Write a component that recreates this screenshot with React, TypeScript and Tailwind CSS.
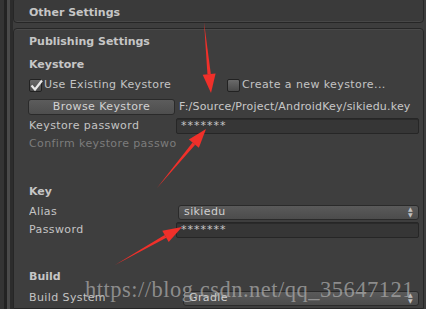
import React from "react";

const font = { fontFamily: '"DejaVu Sans", "Liberation Sans", sans-serif' };

const Checkbox = ({ checked }: { checked?: boolean }) => (
  <span className="relative inline-block w-[13px] h-[13px] rounded-[2px] border border-[#222] bg-gradient-to-b from-[#6a6a6a] to-[#4a4a4a] mr-[2px]">
    {checked && (
      <svg className="absolute -left-[1px] -top-[2px]" width="15" height="15" viewBox="0 0 15 15">
        <path d="M2.5 7.5 L6 11.5 L13 2.5" fill="none" stroke="#e8e8e8" strokeWidth="2.2" />
      </svg>
    )}
  </span>
);

const Field = ({ children }: { children?: React.ReactNode }) => (
  <div className="flex-1 h-[16px] bg-[#363636] border border-[#262626] shadow-[inset_0_1px_0_#2a2a2a] rounded-[2px] px-[4px] flex items-center text-[#c8c8c8] tracking-[1px]">
    {children}
  </div>
);

const Popup = ({ children }: { children: React.ReactNode }) => (
  <div className="flex-1 h-[15px] rounded-[3px] border border-[#2a2a2a] bg-gradient-to-b from-[#5a5a5a] to-[#4c4c4c] px-[5px] flex items-center justify-between text-[#d0d0d0]">
    <span>{children}</span>
    <span className="flex flex-col items-center leading-none text-[6px] text-[#c0c0c0] -mt-[1px]">
      <span>▲</span>
      <span>▼</span>
    </span>
  </div>
);

const Row = ({ label, dim, children }: { label: string; dim?: boolean; children?: React.ReactNode }) => (
  <div className="flex items-center h-[18px]">
    <div className={`w-[147px] shrink-0 whitespace-nowrap overflow-hidden ${dim ? "text-[#7c7c7c]" : "text-[#c4c4c4]"}`}>{label}</div>
    {children}
  </div>
);

const Arrow = ({ x1, y1, x2, y2 }: { x1: number; y1: number; x2: number; y2: number }) => {
  const dx = x2 - x1;
  const dy = y2 - y1;
  const len = Math.sqrt(dx * dx + dy * dy);
  const ux = dx / len;
  const uy = dy / len;
  const hl = 19;
  const hw = 6.5;
  const bx = x2 - ux * hl;
  const by = y2 - uy * hl;
  const px = -uy;
  const py = ux;
  return (
    <g fill="#f0302a">
      <polygon points={`${x1},${y1} ${bx + px * 1.7},${by + py * 1.7} ${bx - px * 1.7},${by - py * 1.7}`} />
      <polygon points={`${x2},${y2} ${bx + px * hw},${by + py * hw} ${bx - px * hw},${by - py * hw}`} />
    </g>
  );
};

export default function App() {
  return (
    <div className="relative w-[426px] h-[309px] overflow-hidden bg-[#3d3d3d] flex text-[11px] tracking-[0.4px]" style={font}>
      {/* left gutter */}
      <div className="w-[13px] shrink-0 flex">
        <div className="w-[4px] bg-[#343434]" />
        <div className="w-[3px] bg-[#232323]" />
        <div className="w-[3px] bg-[#4a4a4a]" />
        <div className="w-[3px] bg-[#2c2c2c]" />
      </div>

      <div className="flex-1 flex flex-col pr-[2px]">
        {/* Other Settings */}
        <div className="h-[26px] -mt-[3px] border border-[#262626] rounded-[4px] bg-[#3a3a3a] shadow-[inset_0_-1px_0_#474747] flex items-center pl-[15px] pt-[6px] font-bold tracking-normal text-[#c6c6c6]">
          Other Settings
        </div>

        {/* Publishing Settings */}
        <div className="mt-[5px] flex-1 border border-[#262626] rounded-t-[4px] bg-[#3e3e3e] shadow-[inset_0_1px_0_#4a4a4a] pl-[15px] pr-[4px] flex flex-col">
          <div className="h-[22px] mt-[2px] flex items-center font-bold tracking-normal text-[#c6c6c6]">Publishing Settings</div>
          <div className="h-[20px] mt-[2px] flex items-center font-bold tracking-normal text-[#c6c6c6]">Keystore</div>
          <div className="h-[18px] mt-[1px] flex items-center text-[#c4c4c4]">
            <div className="w-[198px] flex items-center">
              <Checkbox checked />
              <span>Use Existing Keystore</span>
            </div>
            <div className="flex items-center">
              <Checkbox />
              <span>Create a new keystore...</span>
            </div>
          </div>
          <div className="h-[18px] mt-[4px] flex items-center">
            <div className="w-[147px] shrink-0 -ml-[1px] h-[16px] rounded-[3px] border border-[#2a2a2a] bg-gradient-to-b from-[#5c5c5c] to-[#4e4e4e] flex items-center justify-center text-[#d2d2d2]">
              Browse Keystore
            </div>
            <div className="ml-[4px] whitespace-nowrap tracking-[0.2px] text-[#c8c8c8]">F:/Source/Project/AndroidKey/sikiedu.key</div>
          </div>
          <div className="mt-[1px]">
            <Row label="Keystore password">
              <Field>*******</Field>
            </Row>
          </div>
          <Row label="Confirm keystore password" dim />

          <div className="h-[29px]" />
          <div className="h-[20px] flex items-center font-bold tracking-normal text-[#c6c6c6]">Key</div>
          <div className="mt-[1px]">
            <Row label="Alias">
              <div className="flex-1 pl-[2px]">
                <div className="flex">
                  <Popup>sikiedu</Popup>
                </div>
              </div>
            </Row>
          </div>
          <Row label="Password">
            <Field>*******</Field>
          </Row>

          <div className="h-[28px]" />
          <div className="h-[20px] flex items-center font-bold tracking-normal text-[#c6c6c6]">Build</div>
          <div className="mt-[2px]">
            <Row label="Build System">
              <div className="flex-1 pl-[7px]">
                <div className="flex">
                  <Popup>Gradle</Popup>
                </div>
              </div>
            </Row>
          </div>
        </div>
      </div>

      {/* watermark */}
      <div
        className="absolute left-[85px] top-[273px] text-[22.5px] text-[#b0b0b0]/70 whitespace-nowrap tracking-[0.5px] pointer-events-none"
        style={{ fontFamily: '"Liberation Serif", "DejaVu Serif", serif' }}
      >
        https://blog.csdn.net/qq_35647121
      </div>

      {/* annotation arrows */}
      <svg className="absolute inset-0 pointer-events-none" width="426" height="309">
        <Arrow x1={204} y1={22} x2={211} y2={93} />
        <Arrow x1={157} y1={188} x2={206} y2={129} />
        <Arrow x1={115} y1={265} x2={182} y2={227} />
      </svg>
    </div>
  );
}
